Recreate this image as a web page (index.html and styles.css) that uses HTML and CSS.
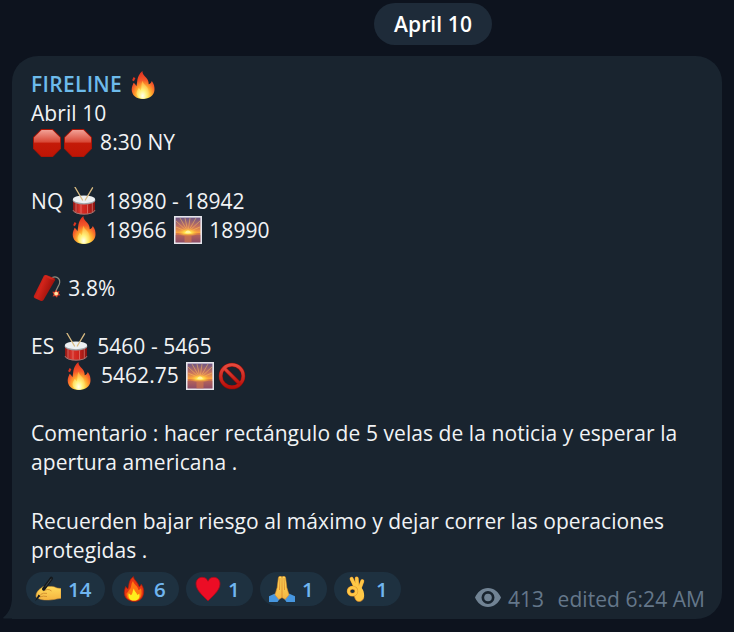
FILE: index.html
```html
<!DOCTYPE html>
<html lang="es">
<head>
<meta charset="utf-8">
<title>FIRELINE</title>
<link rel="stylesheet" href="styles.css">
</head>
<body>
<svg class="defs" aria-hidden="true">
  <defs>
    <radialGradient id="gFire" cx=".52" cy=".88" r=".9">
      <stop offset="0" stop-color="#fffbd0"/><stop offset=".2" stop-color="#ffe95a"/><stop offset=".4" stop-color="#ffa52c"/><stop offset=".62" stop-color="#f4572a"/><stop offset="1" stop-color="#dc2a1e"/>
    </radialGradient>
    <radialGradient id="gCore" cx=".5" cy=".85" r=".8">
      <stop offset="0" stop-color="#fffff0"/><stop offset=".4" stop-color="#fff27a"/><stop offset="1" stop-color="#ffa536"/>
    </radialGradient>
    <linearGradient id="gStop" x2="0" y2="1">
      <stop offset="0" stop-color="#f2a196"/><stop offset=".45" stop-color="#d94a38"/><stop offset=".52" stop-color="#c41a08"/><stop offset="1" stop-color="#bf1505"/>
    </linearGradient>
    <linearGradient id="gDrum">
      <stop offset="0" stop-color="#8e1815"/><stop offset=".3" stop-color="#d8342c"/><stop offset=".6" stop-color="#cf241d"/><stop offset="1" stop-color="#851310"/>
    </linearGradient>
    <linearGradient id="gSky" x2="0" y2="1">
      <stop offset="0" stop-color="#6d5686"/><stop offset=".35" stop-color="#c4705f"/><stop offset=".62" stop-color="#ffa53c"/><stop offset=".64" stop-color="#d87a47"/><stop offset="1" stop-color="#7d4864"/>
    </linearGradient>
    <radialGradient id="gSun"><stop offset="0" stop-color="#fffbc0"/><stop offset=".35" stop-color="#ffe04a"/><stop offset="1" stop-color="#ff9a2c" stop-opacity="0"/></radialGradient>
    <linearGradient id="gStick" x1="0" y1="0" x2="1" y2=".5">
      <stop offset="0" stop-color="#8f100c"/><stop offset=".45" stop-color="#d3241a"/><stop offset="1" stop-color="#8d0c08"/>
    </linearGradient>
    <linearGradient id="gBan" x2="0" y2="1"><stop offset="0" stop-color="#e5493d"/><stop offset="1" stop-color="#b80f0a"/></linearGradient>
    <linearGradient id="gSkin" x2="0" y2="1"><stop offset="0" stop-color="#ffdc5c"/><stop offset="1" stop-color="#f5b440"/></linearGradient>
    <symbol id="fire" viewBox="0 0 28 28">
      <path fill="url(#gFire)" d="M14 28C7 28 2.700 24 2.700 18.500C2.700 15.500 4 13.800 4.600 11.800C6 12.700 6.700 13.800 7.300 15.300C8.800 11.500 7 5.500 13.400 0C13.300 3 15 4.400 17 6.500C19.300 9 19.700 11 19.700 13.300C21.400 12.800 22.400 11.500 22.800 10C25 12.800 25.700 15.800 25.500 19C25 24.500 20.500 28 14 28Z"/>
      <path fill="#df3521" d="M4.600 5.900L6.400 7.200L4.900 10.200L3.100 9.200Z"/>
      <path fill="url(#gCore)" d="M13.800 27.600C9.600 27.500 7.300 24.800 7.600 21.500C7.900 19.500 9.100 18.500 9.600 17C10.700 17.500 11.200 18.500 11.400 19.500C13.300 17 11.600 13.500 13.600 9.700C14.500 14 18.800 14.700 19.400 19.500C20.800 24.200 18 27.600 13.800 27.600Z"/>
    </symbol>
    <symbol id="stop" viewBox="0 0 28 28">
      <path fill="#a91507" d="M8.200 0H19.800L28 8.200V19.800L19.800 28H8.200L0 19.800V8.200Z"/>
      <path fill="url(#gStop)" d="M8.600 1H19.400L27 8.600V19.400L19.400 27H8.600L1 19.400V8.600Z"/>
    </symbol>
    <symbol id="drum" viewBox="0 0 28 28">
      <path fill="url(#gDrum)" d="M3 13.500H25V23.500C23.500 28.700 4.500 28.700 3 23.500Z"/>
      <path fill="none" stroke="#a18f8c" stroke-width=".8" d="M2.900 23C4.500 28.600 23.500 28.600 25.100 23"/>
      <path stroke="#e58f87" stroke-width=".6" d="M6 16V25M11 17.500V26.500M17.500 17.500V26.500M22.300 16V25"/>
      <ellipse cx="14" cy="13.300" rx="11.400" ry="4.300" fill="#9ea4a8"/>
      <ellipse cx="14" cy="12.300" rx="11.200" ry="3.900" fill="#edf0f2"/>
      <path stroke="#d9bb82" stroke-width="1.300" stroke-linecap="round" d="M5 .2L12.500 13M22.500 .8L15.300 13"/>
    </symbol>
    <symbol id="sunrise" viewBox="0 0 28 28">
      <path fill="#e5e4ea" d="M0 0H28V28H0Z"/>
      <path fill="url(#gSky)" d="M1.600 1.600H26.400V26.400H1.600Z"/>
      <path stroke="#ffc35a" stroke-opacity=".65" stroke-width=".8" d="M14 16L2 11M14 16L2 5M14 16L6 2M14 16L11 2M14 16L16 2M14 16L22 2M14 16L26 5M14 16L26 11"/>
      <path fill="#9d526a" fill-opacity=".5" d="M1.600 19H26.400V26.400H1.600Z"/>
      <ellipse cx="14" cy="16.500" rx="11" ry="4.200" fill="url(#gSun)"/>
      <path fill="#fff3a0" d="M11.500 17A2.500 2.500 0 0 1 16.500 17Z"/>
      <path fill="#d97c4a" fill-opacity=".6" d="M10.500 18.500H17.500V26.400H10.500Z"/>
    </symbol>
    <symbol id="dynamite" viewBox="0 0 28 28">
      <path fill="none" stroke="#8f8d80" stroke-width="1.200" d="M17.500 5C22 1 27 3.500 26.700 8.500C26.400 12 23 14 23 18.500"/>
      <path fill="url(#gStick)" d="M11 1.500Q12 .8 14 1.200L21.500 4.300Q22.700 5 22 6.300L10.500 26Q9.500 27.500 7.500 26.800L1.500 24Q.300 23.200 1 21.700Z"/>
      <path fill="#d02a1e" d="M12 1.800Q14.500 1 21.300 5.200Q18 6.800 12 1.800Z"/>
      <path fill="#e0402a" d="M23 15.500L24.200 17.800L26.500 17L25.700 19.300L27.300 21.200L24.800 21.500L24 23.700L22.200 22L19.600 22.500L20.700 20.200L19.300 17.800L21.800 17.800Z"/>
      <circle cx="23.200" cy="19.600" r="1.900" fill="#ffe5a4"/>
    </symbol>
    <symbol id="ban" viewBox="0 0 28 28">
      <g fill="none" stroke="#8f0d08" stroke-width="4"><circle cx="14" cy="14" r="11.300"/><path d="M6 6L22 22"/></g>
      <g fill="none" stroke="url(#gBan)" stroke-width="3"><circle cx="14" cy="14" r="11.300"/><path d="M6 6L22 22"/></g>
    </symbol>
    <symbol id="writing" viewBox="0 0 26 26">
      <path fill="url(#gSkin)" stroke="#dc9632" stroke-width=".5" d="M1 20C1 16.500 3.500 13.500 7 11.500C8.500 10 11 9.600 12.500 10.600L15.200 10.500C18.500 10 19.800 11.200 22 12L26 12.600V22.300C20 23.200 16 24.300 12 24C8 24 4.500 23.500 3.200 22C1.800 22 1 21 1 20Z"/>
      <path fill="none" stroke="#d18c30" stroke-width=".9" d="M5.500 18.500Q8.500 16.500 12 17.400M5 21Q8.500 19.500 12 20.500M8.500 14.800L12.300 13.500Q14.500 13.200 16.500 15"/>
      <path stroke="#15191c" stroke-width="3.400" stroke-linecap="round" d="M16.300 2.400L8.700 13"/>
      <path stroke="#4c5357" stroke-width=".8" d="M16.300 2.800L10.500 10.500"/>
      <path fill="#15191c" d="M3.500 18.500L0 25.300L5.500 20Z"/>
    </symbol>
    <symbol id="flame" viewBox="0 0 26 26">
      <path fill="#e53412" stroke="#a71b0c" stroke-width=".7" d="M13 25.500C6.800 25.300 3.200 21.500 3.300 16.600C3.400 14 4 12.500 4.600 10.500L6.800 13C8.400 9.500 7 4.500 12.400 .6C12.400 3.600 16.500 5.500 18.200 10.800C19.300 10.400 19.900 9.500 20.200 8.300C22.300 10.900 23 13.800 22.600 17C22 22 18.500 25.500 13 25.500Z"/>
      <path fill="#ff7811" d="M12.800 24.800C7.500 24.500 5.300 21.300 5.500 17.500C6.300 16.300 7.500 15.600 8 14C11 12 9.500 8.500 12 5C13 8.700 17 10 17.400 14C18.700 13.800 19.400 13.200 20 12C21.700 19 20 24.800 12.800 24.800Z"/>
      <path fill="#ffee1c" d="M13 24.600C8.500 24.500 7 21.500 7.500 17.400C8.800 17.500 9.400 18.500 9.800 19.300C12.100 17.700 11.300 15 12.800 12.500C13.500 15.700 15.700 16.300 16.200 18.800C17.200 18.600 17.700 18 18.200 17.400C19.300 21 17.700 24.600 13 24.600Z"/>
    </symbol>
    <symbol id="heart" viewBox="0 0 26 26">
      <path fill="#ec0d25" stroke="#a20d1a" stroke-width=".8" d="M13 25C9 20.500 1 14.700 1 8C1 3.800 3.700 1.300 7.200 1.300C10 1.300 12 2.700 13 5.200C14 2.700 16 1.300 18.800 1.300C22.300 1.300 25 3.800 25 8C25 14.700 17 20.500 13 25Z"/>
    </symbol>
    <symbol id="pray" viewBox="0 0 26 26">
      <path fill="#4797e0" d="M6.700 17.300L0 20.300V26H8.500L11 22.500ZM19.300 17.300L26 20.300V26H17.500L15 22.500Z"/>
      <path fill="url(#gSkin)" stroke="#e08e2a" stroke-width=".6" d="M9.400 2Q9.600 0 11.300 .2Q12.500 0 13 1.200Q13.500 0 14.700 .2Q16.400 0 16.600 2L17.800 11.500L20 18.800L16.300 23.300Q14.500 22.800 13 21.500Q11.500 22.800 9.700 23.300L6 18.800L8.200 11.500Z"/>
      <path stroke="#d9852b" stroke-width=".8" d="M13 1V21.500M11 2L10.500 14M15 2L15.500 14"/>
    </symbol>
    <symbol id="ok" viewBox="0 0 26 26">
      <g fill="none" stroke-linecap="round" stroke="#dd902d" stroke-width="3.900">
        <path d="M19.300 5.200L16 14M13.700 2.500L14.500 13M8.600 2.800L13 12"/>
      </g>
      <g fill="none" stroke-linecap="round" stroke="#ffc846" stroke-width="3.100">
        <path d="M19.300 5.200L16 14M13.700 2.500L14.500 13M8.600 2.800L13 12"/>
      </g>
      <path fill="#ffc846" d="M12 10L18.300 11.500C20.800 14 21.500 18 21 21.300C20.500 25 15.800 26.700 13.300 24.500C11.800 23 12 21 10.500 19L14 16Z"/>
      <path fill="none" stroke="#d9862a" stroke-width=".7" d="M20.800 21.500C20.300 25 15.800 26.700 13.300 24.500C12 23.200 12 21.500 11 20"/>
      <ellipse cx="9.500" cy="15.200" rx="3.900" ry="3.600" fill="#1e3140" stroke="#dd902d" stroke-width="3.600"/>
      <ellipse cx="9.500" cy="15.200" rx="3.900" ry="3.600" fill="none" stroke="#ffc846" stroke-width="2.600"/>
    </symbol>
  </defs>
</svg>
<main class="chat">
  <div class="date">April 10</div>
  <article class="bubble">
    <svg class="tail" viewBox="0 0 12 30" aria-hidden="true"><path d="M9 0V8C9 17 6 24 .500 28.200Q-.500 29.500 1 29.500H12V0Z"/></svg>
    <div class="message">
      <p><span class="sender">FIRELINE</span> <svg class="emoji"><use href="#fire"/></svg></p>
      <p>Abril 10</p>
      <p><svg class="emoji"><use href="#stop"/></svg><svg class="emoji"><use href="#stop"/></svg> 8:30 NY</p>
      <p class="gap">NQ <svg class="emoji"><use href="#drum"/></svg> 18980 - 18942</p>
      <p class="indent-nq"><svg class="emoji"><use href="#fire"/></svg> 18966 <svg class="emoji"><use href="#sunrise"/></svg> 18990</p>
      <p class="gap"><svg class="emoji"><use href="#dynamite"/></svg> 3.8%</p>
      <p class="gap">ES <svg class="emoji"><use href="#drum"/></svg> 5460 - 5465</p>
      <p class="indent-es"><svg class="emoji"><use href="#fire"/></svg> 5462.75 <svg class="emoji"><use href="#sunrise"/></svg><svg class="emoji"><use href="#ban"/></svg></p>
      <p class="gap">Comentario : hacer rectángulo de 5 velas de la noticia y esperar la</p>
      <p>apertura americana .</p>
      <p class="gap">Recuerden bajar riesgo al máximo y dejar correr las operaciones</p>
      <p>protegidas .</p>
    </div>
    <footer class="footer">
      <div class="reactions">
        <span class="reaction wide"><svg><use href="#writing"/></svg>14</span>
        <span class="reaction"><svg><use href="#flame"/></svg>6</span>
        <span class="reaction"><svg><use href="#heart"/></svg>1</span>
        <span class="reaction"><svg><use href="#pray"/></svg>1</span>
        <span class="reaction"><svg><use href="#ok"/></svg>1</span>
      </div>
      <div class="meta">
        <svg class="eye" viewBox="0 0 26 19"><path fill-rule="evenodd" d="M13 0C19 0 23.500 4 26 9.500C23.500 15 19 19 13 19C7 19 2.500 15 0 9.500C2.500 4 7 0 13 0ZM13 3A6.500 6.500 0 1 0 13 16A6.500 6.500 0 1 0 13 3Z"/><circle cx="13" cy="9.500" r="3.800"/></svg>
        <span class="views">413</span>
        <span>edited 6:24 AM</span>
      </div>
    </footer>
  </article>
</main>
</body>
</html>
```
FILE: styles.css
```css
* { box-sizing: border-box; }
body {
  margin: 0;
  height: 632px;
  overflow: hidden;
  background: #0d131e;
  color: #f1f3f5;
  font: 400 21px/29.1px "Open Sans", "Noto Sans", sans-serif;
}
.defs { position: absolute; width: 0; height: 0; }
.chat { display: flex; flex-direction: column; padding: 3px 12px 0; }
.date {
  width: 118px;
  height: 42px;
  margin-left: 362px;
  border-radius: 21px;
  background: #1e2b39;
  color: #fff;
  font-weight: 600;
  line-height: 42px;
  text-align: center;
  letter-spacing: .1px;
}
.bubble {
  position: relative;
  width: 710px;
  height: 563px;
  margin-top: 11px;
  padding: 14.2px 17px 0 19px;
  border-radius: 26px 26px 26px 0;
  background: #19242f;
}
.tail { position: absolute; left: -9px; bottom: 0; width: 12px; height: 30px; fill: #19242f; }
.message { white-space: nowrap; height: 493.8px; letter-spacing: .065px; }
.message p { margin: 0; height: 29.1px; }
.message .gap { margin-top: 29.1px; }
.message .indent-nq { padding-left: 37.8px; }
.message .indent-es { padding-left: 32.6px; }
.sender { color: #6dbbeb; font-weight: 600; letter-spacing: .3px; }
.emoji { width: 28px; height: 28px; margin: -4px 2.100px -4px 1.700px; vertical-align: -2.5px; }
.footer { display: flex; justify-content: space-between; margin: 8px 0 0 -5px; }
.reactions { display: flex; gap: 7px; }
.reaction {
  display: flex;
  align-items: center;
  gap: 7px;
  width: 67px;
  height: 34px;
  padding-left: 9px;
  border-radius: 17px;
  background: #1e3140;
  color: #70b5ef;
  font-size: 20.5px;
  font-weight: 600;
  line-height: 36px;
}
.wide { width: 79px; }
.reaction svg { width: 26px; height: 26px; }
.meta { display: flex; align-items: center; color: #64778a; height: 29px; margin-top: 13.5px; letter-spacing: .05px; }
.eye { width: 26px; height: 19px; margin: -4px 7px 0 0; fill: #718394; }
.views { margin-right: 13.5px; }
```
